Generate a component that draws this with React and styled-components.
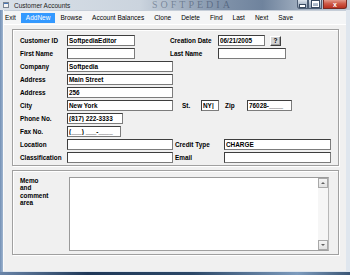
import React from 'react';
import styled, { createGlobalStyle } from 'styled-components';

const Global = createGlobalStyle`
  html, body { margin: 0; padding: 0; }
  body {
    width: 350px; height: 275px; overflow: hidden;
    background: linear-gradient(90deg, #6a85a8 0%, #1f3858 25%, #2c4868 55%, #7d9bbd 85%, #3b5675 100%);
    font-family: "Liberation Sans", Arial, sans-serif;
  }
`;

const Window = styled.div`
  width: 350px; height: 272px;
  display: flex; flex-direction: column;
  background: linear-gradient(90deg, #7390b6 0, #9fb5cf 3px, #dfe6ee 3px);
`;

const TitleBar = styled.div`
  position: relative; height: 10px; flex: none;
  display: flex; align-items: flex-start;
  overflow: hidden;
  background: linear-gradient(90deg, #d9e0e8 0%, #cbd4de 40%, #8294ab 62%, #6f839d 75%, #a9b6c6 88%, #c1ccd8 100%);
`;

const AppIcon = styled.svg`
  flex: none; margin: 2px 0 0 3px;
`;

const Title = styled.div`
  margin-left: 5px; padding-top: 2px;
  font-size: 6.5px; line-height: 8px; color: #1c1c1c;
  white-space: nowrap;
`;

const Watermark = styled.div`
  position: absolute; left: 152px; top: 0;
  font-family: "Liberation Serif", serif; font-size: 10px; line-height: 10px; letter-spacing: 3px;
  color: rgba(25, 45, 75, 0.4); white-space: nowrap; pointer-events: none;
`;

const Caption = styled.div`
  margin-left: auto; margin-right: 3px;
  display: flex;
`;

const CapButton = styled.div`
  height: 9px; width: ${p => p.w}px; box-sizing: border-box;
  display: flex; align-items: center; justify-content: center;
  border: 1px solid ${p => (p.close ? '#7a2a22' : '#4e5e74')};
  border-top: none;
  margin-left: ${p => p.ml || 0}px;
  border-radius: ${p => p.r || '0'};
  background: ${p => (p.close
    ? 'linear-gradient(180deg, #e29a8c 0%, #cf5a48 45%, #b8301f 100%)'
    : 'linear-gradient(180deg, #dde4ec 0%, #b4c0cf 45%, #8e9db1 100%)')};
  color: #fff; font-size: 7px; font-weight: bold; line-height: 7px;
`;

const Dash = styled.div`
  width: 5px; height: 2px; background: #fff; border: 1px solid #394a60; margin-top: 3px; box-sizing: content-box;
`;

const Square = styled.div`
  width: 5px; height: 3px; border: 1px solid #fff; border-top-width: 2px; outline: 1px solid #394a60;
`;

const Body = styled.div`
  flex: 1; display: flex; flex-direction: column;
  margin: 0 4px 1px 3px;
  background: #f0f0f0;
  border-left: 1px solid #fbfbfb;
`;

const MenuBar = styled.div`
  height: 13px; flex: none;
  display: flex; align-items: center;
  background: #f4f5f6;
  border-top: 1px solid #c6ced8;
  padding-left: 0;
`;

const MenuItem = styled.div`
  height: 10px; line-height: 10px;
  padding: 0 5px;
  font-size: 6.5px; white-space: nowrap;
  color: ${p => (p.active ? '#fff' : '#000')};
  background: ${p => (p.active ? '#3399ff' : 'transparent')};
  &:first-child { padding-left: 1px; }
`;

const Content = styled.div`
  flex: 1; display: flex; flex-direction: column; gap: 4px;
  padding: 4px 7px 0 8px;
  border-top: 1px solid #ffffff;
`;

const GroupBox = styled.div`
  height: ${p => p.h}px; box-sizing: border-box;
  border: 1px solid #a0a0a0;
  box-shadow: 1px 1px 0 #ffffff, inset 1px 1px 0 #ffffff;
  padding: ${p => p.pad};
  display: flex; flex-direction: ${p => p.dir || 'column'};
`;

const Row = styled.div`
  height: 13px; display: flex; align-items: center;
`;

const Label = styled.div`
  flex: none; width: ${p => p.w}px;
  margin-left: ${p => p.ml || 0}px;
  font-size: 6.4px; font-weight: bold; color: #000;
  white-space: nowrap;
`;

const Field = styled.input`
  flex: none; width: ${p => p.w}px; height: 11px; box-sizing: border-box;
  margin: 0 0 0 ${p => p.ml || 0}px;
  padding: 0 0 0 1px;
  border: 1px solid; border-color: #3e3e3e #7c7c7c #7c7c7c #3e3e3e;
  background: #fff; color: #000;
  font-family: "Liberation Sans", Arial, sans-serif;
  font-size: 6.4px; font-weight: bold;
  outline: none;
`;

const HelpButton = styled.div`
  flex: none; width: 11px; height: 10px; box-sizing: border-box;
  margin-left: 5px;
  border: 1px solid; border-color: #ffffff #404040 #404040 #ffffff;
  box-shadow: inset -1px -1px 0 #a0a0a0;
  background: #d4d4d4;
  display: flex; align-items: center; justify-content: center;
  font-size: 6.5px; font-weight: bold; color: #000;
`;

const MemoLabel = styled.div`
  flex: none; width: 49px;
  font-size: 6.4px; font-weight: bold; line-height: 7.3px; color: #000;
`;

const MemoBox = styled.div`
  width: 260px; height: 74px; box-sizing: border-box;
  border: 1px solid; border-color: #9a9a9a #b8b8b8 #a0a0a0 #9a9a9a;
  display: flex; background: #fff;
`;

const MemoText = styled.div`
  flex: 1;
`;

const ScrollBar = styled.div`
  width: 10px; display: flex; flex-direction: column;
  background: #f6f6f6;
`;

const ScrollTrack = styled.div`
  flex: 1;
`;

const ScrollBtn = styled.div`
  height: 10px; box-sizing: border-box;
  border: 1px solid #a8a8a8;
  background: linear-gradient(180deg, #f4f4f4, #e2e2e2);
  display: flex; align-items: center; justify-content: center;
`;

const Tri = styled.div`
  width: 0; height: 0;
  border-left: 2px solid transparent; border-right: 2px solid transparent;
  ${p => (p.up ? 'border-bottom: 2px solid #606060;' : 'border-top: 2px solid #606060;')}
`;

const menu = ['Exit', 'AddNew', 'Browse', 'Account Balances', 'Clone', 'Delete', 'Find', 'Last', 'Next', 'Save'];

export default function App() {
  return (
    <>
      <Global />
      <Window>
        <TitleBar>
          <AppIcon width="6" height="6" viewBox="0 0 6 6">
            <rect x="0.5" y="0.5" width="5" height="5" fill="#f4f4f4" stroke="#7a8594" />
            <rect x="1" y="1" width="4" height="1" fill="#4a78b8" />
          </AppIcon>
          <Title>Customer Accounts</Title>
          <Watermark>SOFTPEDIA</Watermark>
          <Caption>
            <CapButton w={11} r="0 0 0 3px"><Dash /></CapButton>
            <CapButton w={14}><Square /></CapButton>
            <CapButton w={24} ml={1} close r="0 0 3px 0">x</CapButton>
          </Caption>
        </TitleBar>
        <Body>
          <MenuBar>
            {menu.map(m => (
              <MenuItem key={m} active={m === 'AddNew'}>{m}</MenuItem>
            ))}
          </MenuBar>
          <Content>
            <GroupBox h={137} pad="4px 0 0 7px">
              <Row>
                <Label w={47}>Customer ID</Label>
                <Field w={68} defaultValue="SoftpediaEditor" />
                <Label w={48} ml={35}>Creation Date</Label>
                <Field w={47} defaultValue="06/21/2005" />
                <HelpButton>?</HelpButton>
              </Row>
              <Row>
                <Label w={47}>First Name</Label>
                <Field w={68} defaultValue="" />
                <Label w={48} ml={35}>Last Name</Label>
                <Field w={68} defaultValue="" />
              </Row>
              <Row>
                <Label w={47}>Company</Label>
                <Field w={106} defaultValue="Softpedia" />
              </Row>
              <Row>
                <Label w={47}>Address</Label>
                <Field w={106} defaultValue="Main Street" />
              </Row>
              <Row>
                <Label w={47}>Address</Label>
                <Field w={106} defaultValue="256" />
              </Row>
              <Row>
                <Label w={47}>City</Label>
                <Field w={106} defaultValue="New York" />
                <Label w={19} ml={9}>St.</Label>
                <Field w={18} defaultValue="NY|" />
                <Label w={22} ml={6}>Zip</Label>
                <Field w={45} defaultValue="76028-____" />
              </Row>
              <Row>
                <Label w={47}>Phone No.</Label>
                <Field w={56} defaultValue="(817) 222-3333" />
              </Row>
              <Row>
                <Label w={47}>Fax No.</Label>
                <Field w={54} defaultValue="(___) ___-____" />
              </Row>
              <Row>
                <Label w={47}>Location</Label>
                <Field w={106} defaultValue="" />
                <Label w={49} ml={2}>Credit Type</Label>
                <Field w={107} defaultValue="CHARGE" />
              </Row>
              <Row>
                <Label w={47}>Classification</Label>
                <Field w={106} defaultValue="" />
                <Label w={49} ml={2}>Email</Label>
                <Field w={107} defaultValue="" />
              </Row>
            </GroupBox>
            <GroupBox h={85} pad="6px 0 0 7px" dir="row">
              <MemoLabel>Memo<br />and<br />comment<br />area</MemoLabel>
              <MemoBox>
                <MemoText />
                <ScrollBar>
                  <ScrollBtn><Tri up /></ScrollBtn>
                  <ScrollTrack />
                  <ScrollBtn><Tri /></ScrollBtn>
                </ScrollBar>
              </MemoBox>
            </GroupBox>
          </Content>
        </Body>
      </Window>
    </>
  );
}
